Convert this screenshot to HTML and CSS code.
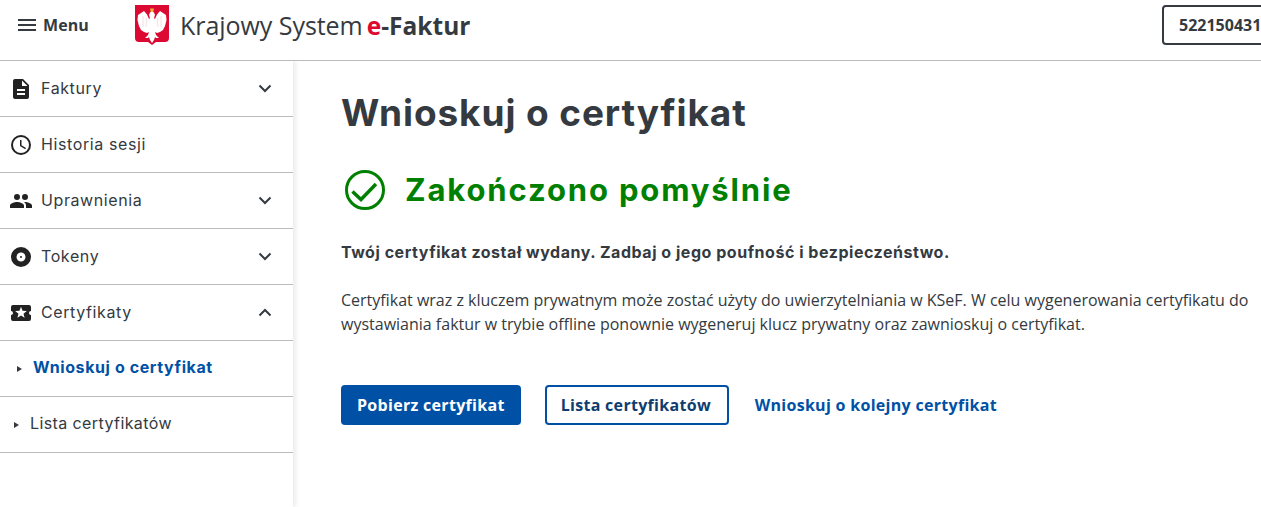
FILE: index.html
```html
<!DOCTYPE html>
<html lang="pl">
<head>
    <meta charset="UTF-8">
    <title>Krajowy System e-Faktur</title>
    <link rel="stylesheet" href="styles.css">
</head>
<body>

<header class="topbar">
    <button class="menuBtn">
        <svg class="menuIcon" viewBox="0 0 18 12" width="18" height="12"><path d="M0 1h18M0 6h18M0 11h18" stroke="#343a40" stroke-width="2"/></svg>
        Menu
    </button>
    <a class="brand" href="#">
        <svg class="emblem" viewBox="0 0 34 40" width="34" height="40">
            <path d="M0 0H34V33Q34 37 30 37H21L17 40L13 37H4Q0 37 0 33Z" fill="#dc0a32"/>
            <g id="eagleHalf">
                <path d="M17 6L19 7.500 20 10 19 13 20 14 22 9.500 25 6 28 8 31 10 31.500 15 30 21 28 25 25 27 22 28 20 27 21 30 24 33 21 33 20 32 19 35 17 38Z" fill="#fff"/>
                <path d="M22.500 13L23 22M26 11L26 22" stroke="#f3d3d9" stroke-width=".8" fill="none"/>
            </g>
            <use href="#eagleHalf" transform="matrix(-1 0 0 1 34 0)"/>
            <path d="M15 3.500h4l-.7 3.500h-2.600z" fill="#e8b23c"/>
        </svg>
        <span class="brandName">Krajowy System</span>
        <span class="brandBold"><span class="brandE">e</span>-Faktur</span>
    </a>
    <button class="accountBtn">522150431</button>
</header>

<div class="layout">
    <nav class="sidebar">
        <a class="navItem" href="#">
            <svg class="navIcon" viewBox="0 0 24 24"><path d="M14 2H6a2 2 0 0 0-2 2v16a2 2 0 0 0 2 2h12a2 2 0 0 0 2-2V8zm2 16H8v-2h8zm0-4H8v-2h8zm-3-5V3.500L18.500 9z"/></svg>
            <span class="navLabel">Faktury</span>
            <svg class="chevron" viewBox="0 0 14 9"><path d="M1.500 1.500L7 7l5.500-5.500" /></svg>
        </a>
        <a class="navItem" href="#">
            <svg class="navIcon" viewBox="0 0 24 24"><path d="M12 2a10 10 0 1 0 0 20 10 10 0 0 0 0-20zm0 18a8 8 0 1 1 0-16 8 8 0 0 1 0 16zm.5-13H11v6l5.200 3.200.8-1.300-4.500-2.700z"/></svg>
            <span class="navLabel">Historia sesji</span>
        </a>
        <a class="navItem" href="#">
            <svg class="navIcon" viewBox="0 0 24 24"><path d="M16 11a3 3 0 1 0 0-6 3 3 0 0 0 0 6zm-8 0a3 3 0 1 0 0-6 3 3 0 0 0 0 6zm0 2c-2.300 0-7 1.200-7 3.500V19h14v-2.500C15 14.200 10.300 13 8 13zm8 0c-.3 0-.6 0-1 .1 1.200.8 2 1.900 2 3.400V19h6v-2.500c0-2.300-4.700-3.500-7-3.500z"/></svg>
            <span class="navLabel">Uprawnienia</span>
            <svg class="chevron" viewBox="0 0 14 9"><path d="M1.500 1.500L7 7l5.500-5.500" /></svg>
        </a>
        <a class="navItem" href="#">
            <svg class="navIcon" viewBox="0 0 24 24"><path d="M12 2a10 10 0 1 0 0 20 10 10 0 0 0 0-20zm0 14.500a4.500 4.500 0 1 1 0-9 4.500 4.500 0 0 1 0 9zm0-5.500a1 1 0 1 0 0 2 1 1 0 0 0 0-2z"/></svg>
            <span class="navLabel">Tokeny</span>
            <svg class="chevron" viewBox="0 0 14 9"><path d="M1.500 1.500L7 7l5.500-5.500" /></svg>
        </a>
        <a class="navItem" href="#">
            <svg class="navIcon" viewBox="0 0 24 24"><path d="M22 10V6a2 2 0 0 0-2-2H4a2 2 0 0 0-2 2v4a2 2 0 0 1 0 4v4a2 2 0 0 0 2 2h16a2 2 0 0 0 2-2v-4a2 2 0 0 1 0-4zm-6.400 6.800L12 14.500l-3.600 2.300 1.100-4.100-3.300-2.700 4.300-.3L12 5.700l1.500 4 4.300.3-3.300 2.700z"/></svg>
            <span class="navLabel">Certyfikaty</span>
            <svg class="chevron" viewBox="0 0 14 9"><path d="M1.500 7.500L7 2l5.500 5.500" /></svg>
        </a>
        <a class="navItem subItem subActive" href="#"><span class="marker"></span><span class="subLabel">Wnioskuj o certyfikat</span></a>
        <a class="navItem subItem" href="#"><span class="marker"></span><span class="subLabel">Lista certyfikatów</span></a>
    </nav>

    <main class="content">
        <h1>Wnioskuj o certyfikat</h1>
        <div class="status">
            <svg class="statusIcon" viewBox="0 0 40 40" width="40" height="40">
                <circle cx="20" cy="20" r="18.500" fill="none" stroke="#008000" stroke-width="3"/>
                <path d="M7.500 21.500l8.500 8L31 14" fill="none" stroke="#008000" stroke-width="3.500"/>
            </svg>
            <h2>Zakończono pomyślnie</h2>
        </div>
        <p class="lead">Twój certyfikat został wydany. Zadbaj o jego poufność i bezpieczeństwo.</p>
        <p class="body">Certyfikat wraz z kluczem prywatnym może zostać użyty do uwierzytelniania w KSeF. W celu wygenerowania certyfikatu do wystawiania faktur w trybie offline ponownie wygeneruj klucz prywatny oraz zawnioskuj o certyfikat.</p>
        <div class="actions">
            <a class="btn btnPrimary" href="#">Pobierz certyfikat</a>
            <a class="btn btnOutline" href="#">Lista certyfikatów</a>
            <a class="btnLink" href="#">Wnioskuj o kolejny certyfikat</a>
        </div>
    </main>
</div>

</body>
</html>
```

FILE: styles.css
```css
html, body {
    height: 100%;
    overflow: hidden;
}

body {
    margin: 0;
    font-family: "Open Sans", sans-serif;
    color: #343a40;
    background: #fff;
}

a {
    text-decoration: none;
    color: inherit;
}

/* top bar */
.topbar {
    position: relative;
    z-index: 2;
    display: flex;
    align-items: center;
    box-sizing: content-box;
    height: 50px;
    padding: 0 0 10px 18px;
    background: #fff;
    border-bottom: 1px solid #bbb;
}

.menuBtn {
    display: flex;
    align-items: center;
    gap: 7px;
    flex: none;
    width: 117px;
    padding: 0;
    border: none;
    background: none;
    font-family: inherit;
    font-size: 16px;
    font-weight: 700;
    letter-spacing: .1px;
    color: #343a40;
}

.brand {
    display: flex;
    align-items: center;
    height: 46px;
}

.emblem {
    margin-right: 11px;
}

.brandName {
    font-size: 25px;
    margin-right: 4px;
    letter-spacing: -.05px;
}

.brandBold {
    font-size: 24.500px;
    font-weight: 700;
}

.brandE {
    color: #dc0a32;
}

.accountBtn {
    flex: none;
    width: 140px;
    height: 40px;
    margin-left: auto;
    margin-right: -41px;
    padding: 0 15px;
    border: 2px solid #343a40;
    border-radius: 4px;
    background: #fff;
    font-family: inherit;
    font-size: 16px;
    font-weight: 700;
    color: #343a40;
    text-align: left;
}

/* sidebar */
.layout {
    display: flex;
}

.sidebar {
    flex: none;
    width: 293px;
    height: 446px;
    box-shadow: 2px 0 6px rgba(0, 0, 0, .1);
    font-family: Inter, sans-serif;
}

.navItem {
    display: flex;
    align-items: center;
    box-sizing: border-box;
    height: 56px;
    padding: 0 21px 0 9px;
    border-bottom: 1px solid #bbb;
    font-size: 16px;
    letter-spacing: .6px;
    color: #343a40;
}

.navIcon {
    flex: none;
    width: 24px;
    height: 24px;
    fill: #222;
}

.navLabel {
    flex: 1;
    margin-left: 8px;
    padding-bottom: 2px;
}

.chevron {
    flex: none;
    width: 14px;
    height: 9px;
    fill: none;
    stroke: #343a40;
    stroke-width: 2;
}

.subItem {
    padding-left: 14px;
    letter-spacing: .4px;
}

.subLabel {
    padding-bottom: 3px;
}

.marker {
    flex: none;
    width: 0;
    height: 0;
    margin-right: 11px;
    border-style: solid;
    border-width: 3px 0 3px 5px;
    border-color: transparent transparent transparent #343a40;
}

.subActive {
    padding-left: 17px;
    font-weight: 700;
    letter-spacing: .6px;
    color: #0051a5;
}

/* main content */
.content {
    flex: 1;
    padding: 25px 0 0 48px;
    min-width: 0;
}

h1 {
    margin: 0;
    font-family: Inter, sans-serif;
    font-size: 37px;
    line-height: 54px;
    font-weight: 700;
    letter-spacing: .9px;
    color: #343a40;
}

.status {
    display: flex;
    align-items: center;
    gap: 20px;
    margin: 30px 0 0 4px;
    height: 40px;
}

h2 {
    margin: 0;
    padding-bottom: 2px;
    font-family: Inter, sans-serif;
    font-size: 31px;
    font-weight: 700;
    letter-spacing: 1.850px;
    color: #008000;
}

.lead {
    margin: 31px 0 0;
    font-family: Inter, sans-serif;
    font-size: 16px;
    line-height: 22px;
    font-weight: 700;
    letter-spacing: .53px;
}

.body {
    margin: 25px 0 0;
    width: 915px;
    font-size: 16px;
    line-height: 24px;
}

.actions {
    display: flex;
    align-items: center;
    margin-top: 49px;
}

.btn {
    display: flex;
    align-items: center;
    box-sizing: border-box;
    height: 40px;
    padding: 0 16px;
    border-radius: 4px;
    font-size: 16px;
    font-weight: 700;
    letter-spacing: .3px;
}

.btnPrimary {
    background: #0051a5;
    color: #fff;
    margin-right: 24px;
}

.btnOutline {
    padding: 0 15px 0 14px;
    width: 184px;
    border: 2px solid #0051a5;
    color: #0f3d6e;
    margin-right: 26px;
}

.btnLink {
    font-size: 16px;
    font-weight: 700;
    letter-spacing: .3px;
    color: #0051a5;
}
```
